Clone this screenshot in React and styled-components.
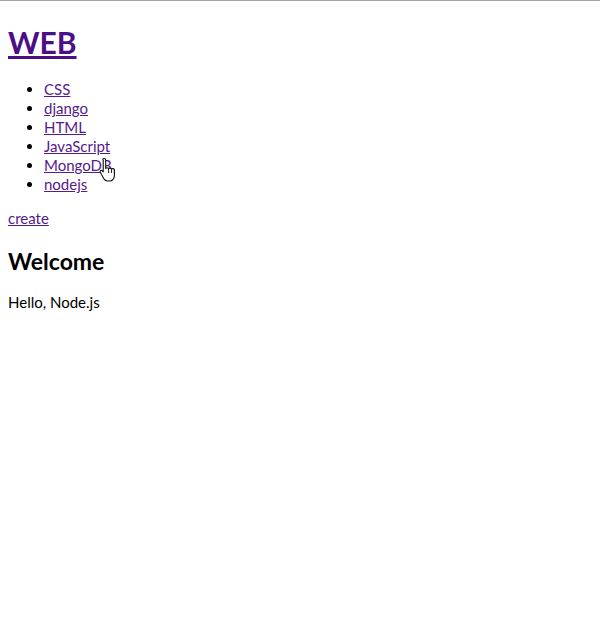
import styled, { createGlobalStyle } from "styled-components";

const Global = createGlobalStyle`
html, body {
  margin: 0;
  background: #fff;
}
body {
  font-family: Lato, "Noto Sans CJK KR", sans-serif;
  font-size: 15px;
  color: #000;
}
`

const Page = styled.div`
border-top: 1px solid #a3a3a3;
padding: 0 8px;
position: relative;
min-height: 632px;
`

const Title = styled.h1`
font-size: 30px;
line-height: 36px;
font-weight: 700;
margin: 23px 0 20px;

a{
  color: #4b0f85;
}
`

const List = styled.ul`
margin: 16px 0 15px;
padding-left: 36px;

li{
  line-height: 19px;
}

a{
  color: #551a8b;
}
`

const Create = styled.a`
color: #551a8b;
display: inline-block;
line-height: 19px;
`

const Heading = styled.h2`
font-size: 23px;
line-height: 28px;
font-weight: 700;
margin: 19px 0 18px;
`

const Text = styled.p`
margin: 0;
line-height: 19px;
`

const Cursor = styled.svg`
position: absolute;
left: 99px;
top: 156px;
width: 18px;
height: 26px;
`

const topics = ['CSS', 'django', 'HTML', 'JavaScript', 'MongoDB', 'nodejs']

const App = () => {
    return (
        <Page>
            <Global />
            <Title><a href="#">WEB</a></Title>
            <List>
                {topics.map(t => (
                    <li key={t}><a href="#">{t}</a></li>
                ))}
            </List>
            <Create href="#">create</Create>
            <Heading>Welcome</Heading>
            <Text>Hello, Node.js</Text>
            <Cursor viewBox="0 0 18 26">
                <path d="M5 1.5c1 0 1.7.7 1.7 1.7v8.3c.3-.9 2.6-1 2.9.3.4-1 2.6-1 2.9.4.5-.9 2.7-.8 2.9.8v5.5c0 2.8-2 5.5-4.6 5.5H8.5c-1.8 0-2.8-.9-3.8-2.4L1.3 15.3c-.7-1.2.8-2.6 2-1.5l.9 1V3.2C3.3 2.2 4 1.5 5 1.5z" fill="#fff" stroke="#111" strokeWidth="1.1" strokeLinejoin="round"/>
                <path d="M9.6 12v4M12.5 12.2v3.8M15.4 13v3" stroke="#111" strokeWidth="0.9"/>
            </Cursor>
        </Page>
    )
}

export default App
